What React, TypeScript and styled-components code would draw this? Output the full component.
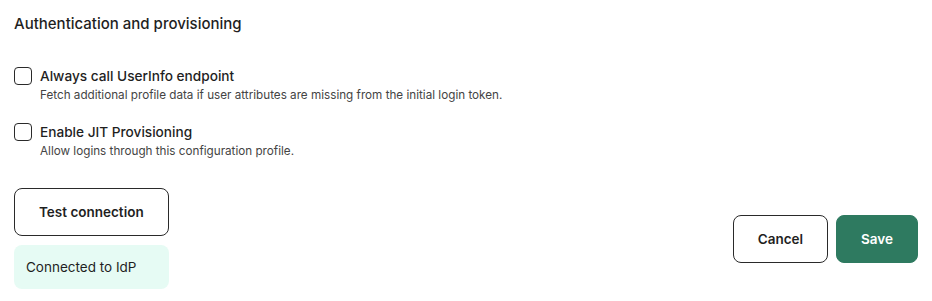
import React from "react";
import styled, { createGlobalStyle } from "styled-components";

const Global = createGlobalStyle`
  html, body { margin: 0; padding: 0; background: #ffffff; }
  body { font-family: Inter, "Noto Sans", sans-serif; color: #1f1f1f; -webkit-font-smoothing: antialiased; }
  * { box-sizing: border-box; }
`;

const Page = styled.div`
  width: 932px;
  padding: 14px 14px 13px 14px;
  display: flex;
  flex-direction: column;
`;

const Heading = styled.h2`
  margin: 0;
  font-size: 15px;
  line-height: 20px;
  font-weight: 500;
  color: #1f1f1f;
`;

const Options = styled.div`
  margin-top: 32px;
  display: flex;
  flex-direction: column;
  gap: 19px;
`;

const Option = styled.label`
  display: grid;
  grid-template-columns: 18px 1fr;
  column-gap: 8px;
  align-items: start;
  cursor: pointer;
`;

const Box = styled.span`
  width: 18px;
  height: 18px;
  margin-top: 1px;
  border: 1.5px solid #2a2a2a;
  border-radius: 4px;
  background: #fff;
`;

const Texts = styled.div`
  display: flex;
  flex-direction: column;
`;

const Label = styled.span`
  font-size: 13.65px;
  line-height: 20px;
  font-weight: 500;
  color: #1f1f1f;
`;

const Desc = styled.span`
  margin-top: 1px;
  font-size: 11.7px;
  line-height: 16px;
  color: #444;
`;

const Footer = styled.div`
  margin-top: 29px;
  display: flex;
  justify-content: space-between;
  align-items: center;
`;

const Left = styled.div`
  display: flex;
  flex-direction: column;
  gap: 9px;
`;

const Actions = styled.div`
  display: flex;
  gap: 8px;
`;

const Button = styled.button<{ $primary?: boolean }>`
  font-family: inherit;
  font-size: 13.5px;
  line-height: 20px;
  font-weight: 600;
  padding: 13px 24px;
  border-radius: 8px;
  border: 1px solid ${(p) => (p.$primary ? "#2e7a60" : "#2a2a2a")};
  background: ${(p) => (p.$primary ? "#2e7a60" : "#ffffff")};
  color: ${(p) => (p.$primary ? "#ffffff" : "#1f1f1f")};
  cursor: pointer;
`;

const Status = styled.div`
  background: #e6fbf4;
  border-radius: 8px;
  padding: 12px 12px;
  font-size: 13.5px;
  line-height: 20px;
  color: #1f1f1f;
`;

const options = [
  {
    label: "Always call UserInfo endpoint",
    desc: "Fetch additional profile data if user attributes are missing from the initial login token.",
  },
  {
    label: "Enable JIT Provisioning",
    desc: "Allow logins through this configuration profile.",
  },
];

export default function App() {
  return (
    <>
      <Global />
      <Page>
        <Heading>Authentication and provisioning</Heading>
        <Options>
          {options.map((o) => (
            <Option key={o.label}>
              <Box />
              <Texts>
                <Label>{o.label}</Label>
                <Desc>{o.desc}</Desc>
              </Texts>
            </Option>
          ))}
        </Options>
        <Footer>
          <Left>
            <Button>Test connection</Button>
            <Status>Connected to IdP</Status>
          </Left>
          <Actions>
            <Button>Cancel</Button>
            <Button $primary>Save</Button>
          </Actions>
        </Footer>
      </Page>
    </>
  );
}
